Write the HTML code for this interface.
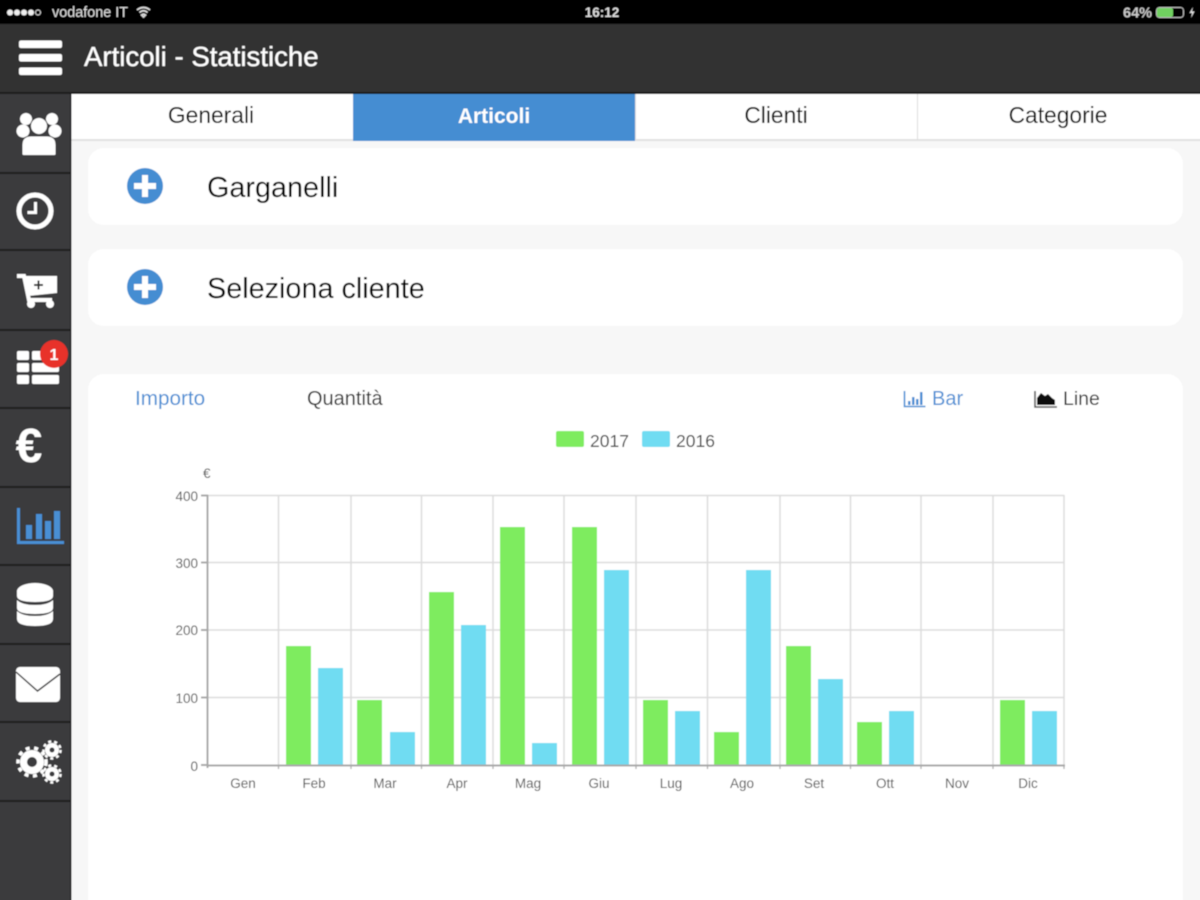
<!DOCTYPE html>
<html lang="it"><head><meta charset="utf-8"><title>Articoli - Statistiche</title>
<style>
html,body{margin:0;padding:0;width:1200px;height:900px;overflow:hidden;background:#f7f7f7}
svg{display:block;position:absolute;left:0;top:0}
text{font-family:"Liberation Sans",sans-serif}
</style></head><body>
<svg width="1200" height="900" viewBox="0 0 1200 900" xmlns="http://www.w3.org/2000/svg">
<defs><filter id="b" filterUnits="userSpaceOnUse" x="-20" y="-20" width="1240" height="940"><feGaussianBlur stdDeviation="0.6"/></filter></defs>
<g filter="url(#b)">
<rect x="-20" y="-20" width="1240" height="940" fill="#f7f7f7"/>
<!-- status bar -->
<rect x="-20" y="-20" width="1240" height="44" fill="#000"/>
<g fill="#eee"><circle cx="10" cy="12.500" r="3"/><circle cx="17" cy="12.500" r="3"/><circle cx="24" cy="12.500" r="3"/><circle cx="31" cy="12.500" r="3"/></g>
<circle cx="38" cy="12.500" r="2.500" fill="none" stroke="#ddd"/>
<text x="52" y="17" font-size="14.400" fill="#ddd">vodafone IT</text>
<path d="M137 10q6.500-5 13 0M139.500 12.500q4-3.500 8 0M141.500 15q2-1.500 4 0l-2 2z" fill="none" stroke="#ddd" stroke-width="1.600"/>
<text x="602" y="17" font-size="13.500" font-weight="bold" fill="#ddd" text-anchor="middle">16:12</text>
<text x="1123" y="17.500" font-size="14.500" font-weight="bold" fill="#c8c8c8">64%</text>
<rect x="1156.500" y="7.500" width="27" height="10" rx="3" fill="none" stroke="#bbb"/>
<rect x="1157" y="8" width="16" height="9" rx="2" fill="#70d060"/>
<path d="M1193 7l-3.500 6h2.500l-1 5 3.500-6.500h-2.500z" fill="#ddd"/>
<!-- header -->
<rect x="-20" y="24" width="1240" height="68" fill="#333"/>
<rect x="-20" y="92" width="1240" height="2" fill="#1a1a1a"/>
<g fill="#fff"><rect x="19" y="40.500" width="43" height="7.500" rx="2"/><rect x="19" y="54" width="43" height="7.500" rx="2"/><rect x="19" y="67.500" width="43" height="7.500" rx="2"/></g>
<text x="84" y="66" font-size="27.600" fill="#fff" stroke="#fff" stroke-width=".25">Articoli - Statistiche</text>
<!-- sidebar -->
<rect x="-20" y="94" width="90" height="826" fill="#3a3a3c"/>
<rect x="70" y="94" width="1.500" height="826" fill="#222"/>
<g fill="#1e1e1e"><rect x="-20" y="172" width="90" height="2"/><rect x="-20" y="249" width="90" height="2"/><rect x="-20" y="329" width="90" height="2"/><rect x="-20" y="407" width="90" height="2"/><rect x="-20" y="486" width="90" height="2"/><rect x="-20" y="564" width="90" height="2"/><rect x="-20" y="643" width="90" height="2"/><rect x="-20" y="721" width="90" height="2"/><rect x="-20" y="800" width="90" height="2"/></g>
<!-- people -->
<g fill="#fff"><circle cx="26" cy="119" r="6"/><circle cx="52" cy="119" r="6"/><circle cx="23" cy="131" r="6.500"/><circle cx="55" cy="131" r="6.500"/><rect x="17" y="127" width="12" height="9" rx="4"/><rect x="49" y="127" width="12" height="9" rx="4"/></g>
<circle cx="39" cy="126" r="8.500" fill="#fff" stroke="#3a3a3c" stroke-width="1"/>
<path d="M22 154v-9q0-9 9-9h16q9 0 9 9v9q0 1.500-2 1.500H24q-2 0-2-1.500z" fill="#fff" stroke="#3a3a3c" stroke-width="1"/>
<!-- clock -->
<circle cx="35" cy="211" r="16" fill="none" stroke="#fff" stroke-width="5"/>
<path d="M35.500 202v10.500h-8" fill="none" stroke="#fff" stroke-width="3"/>
<!-- cart -->
<path d="M17 276h7l5 24h23" fill="none" stroke="#fff" stroke-width="4"/>
<path d="M25 276h32v17l-29 3z" fill="#fff"/>
<circle cx="31" cy="304" r="4" fill="#fff"/><circle cx="50" cy="304" r="4" fill="#fff"/>
<path d="M34 285h9M38.500 280.500v9" stroke="#333" stroke-width="2" fill="none"/>
<!-- table -->
<g fill="#fff"><rect x="17" y="351" width="12" height="9" rx="1.500"/><rect x="17" y="363" width="12" height="9" rx="1.500"/><rect x="17" y="375" width="12" height="9" rx="1.500"/><rect x="32" y="351" width="27" height="9" rx="1.500"/><rect x="32" y="363" width="27" height="9" rx="1.500"/><rect x="32" y="375" width="27" height="9" rx="1.500"/></g>
<circle cx="54" cy="354" r="14" fill="#e8302a"/>
<text x="54" y="360" font-size="16" font-weight="bold" fill="#fff" text-anchor="middle">1</text>
<!-- euro -->
<text x="29" y="462" font-size="48" font-weight="bold" fill="#fff" text-anchor="middle">€</text>
<!-- bars active -->
<g fill="#4a8fd4"><rect x="17" y="508" width="3" height="35"/><rect x="17" y="541" width="47" height="3"/><rect x="26" y="525" width="6" height="14"/><rect x="36" y="514" width="6" height="25"/><rect x="45" y="521" width="6" height="18"/><rect x="54" y="511" width="6" height="28"/></g>
<!-- database -->
<g fill="#fff"><path d="M17 611v8q0 7 18 7t18-7v-8q-5 5-18 5t-18-5z"/><path d="M17 600v8q0 6 18 6t18-6v-8q-5 5-18 5t-18-5z"/><path d="M17 590v6q0 6 18 6t18-6v-6q-5 5-18 5t-18-5z"/><ellipse cx="35" cy="591" rx="18" ry="8"/></g>
<!-- mail -->
<rect x="16" y="667" width="44" height="35" rx="4" fill="#fff"/>
<path d="M16 672l21.500 19 22.500-17" fill="none" stroke="#3a3a3c" stroke-width="1.500"/>
<!-- gears -->
<g fill="#fff">
<circle cx="32" cy="762" r="12"/><circle cx="52" cy="750" r="7"/><circle cx="52" cy="774" r="7"/>
<g stroke="#fff" stroke-width="3.500" stroke-dasharray="4 4.500"><circle cx="32" cy="762" r="14" fill="none"/></g>
<g stroke="#fff" stroke-width="2.500" stroke-dasharray="3 3"><circle cx="52" cy="750" r="8.500" fill="none"/><circle cx="52" cy="774" r="8.500" fill="none"/></g>
</g>
<circle cx="32" cy="762" r="5" fill="#3a3a3c"/><circle cx="52" cy="750" r="2.500" fill="#3a3a3c"/><circle cx="52" cy="774" r="2.500" fill="#3a3a3c"/>
<!-- tabs -->
<rect x="71.500" y="94" width="1150" height="46" fill="#fff"/>
<rect x="71.500" y="139" width="1150" height="2" fill="#e2e2e2"/>
<rect x="353" y="94" width="282" height="47" fill="#458dd2"/>
<rect x="917" y="94" width="1" height="46" fill="#ddd"/>
<rect x="635" y="94" width="1" height="46" fill="#ddd"/>
<g font-size="22.800" text-anchor="middle" fill="#000"><text x="211" y="123">Generali</text><text x="494" y="123" fill="#fff" font-weight="bold" font-size="21">Articoli</text><text x="776" y="123">Clienti</text><text x="1058" y="123">Categorie</text></g>
<!-- cards -->
<rect x="88" y="148" width="1095" height="77" rx="16" fill="#fff"/>
<rect x="88" y="249" width="1095" height="77" rx="16" fill="#fff"/>
<rect x="88" y="374" width="1095" height="560" rx="16" fill="#fff"/>
<circle cx="145" cy="186" r="18" fill="#458dd2"/><path d="M134 186h22M145 175v22" stroke="#fff" stroke-width="6"/>
<circle cx="145" cy="287" r="18" fill="#458dd2"/><path d="M134 287h22M145 276v22" stroke="#fff" stroke-width="6"/>
<text x="207" y="197" font-size="28.800" fill="#000">Garganelli</text>
<text x="207" y="298" font-size="28.800" fill="#000">Seleziona cliente</text>
<!-- chart toolbar -->
<text x="135" y="405" font-size="20.700" fill="#4a8fd4">Importo</text>
<text x="307" y="405" font-size="20" fill="#333">Quantità</text>
<path d="M904.500 391v15.500h21" fill="none" stroke="#4a8fd4" stroke-width="1.600"/>
<g fill="#4a8fd4"><rect x="908" y="401" width="2.500" height="4"/><rect x="912" y="397" width="2.500" height="8"/><rect x="916" y="399" width="2.500" height="6"/><rect x="920" y="392" width="2.500" height="13"/></g>
<text x="932" y="405" font-size="20" fill="#4a8fd4">Bar</text>
<path d="M1035 391v16h22" fill="none" stroke="#555" stroke-width="1.600"/>
<path d="M1037 405v-7l4-5 4 3 3-2 4 4 3 2v5z" fill="#111"/>
<text x="1063" y="405" font-size="19.500" fill="#333">Line</text>
<!-- legend -->
<rect x="556" y="431" width="28" height="16" rx="2" fill="#7eec5e"/>
<text x="590" y="447" font-size="17.500" fill="#444">2017</text>
<rect x="642" y="431" width="28" height="16" rx="2" fill="#6fdcf2"/>
<text x="676" y="447" font-size="17.500" fill="#444">2016</text>
<text x="203" y="478" font-size="13.500" fill="#555">€</text>
<!-- grid -->
<g stroke="#dcdcdc" stroke-width="1.500" fill="none">
<path d="M207 495.500H1064M207 562.500H1064M207 630H1064M207 697.500H1064"/>
<path d="M278.500 495V765M351 495V765M421.500 495V765M493 495V765M564 495V765M636 495V765M707.500 495V765M780 495V765M850.500 495V765M921 495V765M993 495V765M1064 495V765"/>
</g>
<!-- bars -->
<g fill="#7eec5e">
<rect x="286" y="646" width="25" height="119"/><rect x="357" y="700" width="25" height="65"/><rect x="429" y="592" width="25" height="173"/><rect x="500" y="527" width="25" height="238"/><rect x="572" y="527" width="25" height="238"/><rect x="643" y="700" width="25" height="65"/><rect x="714" y="732" width="25" height="33"/><rect x="786" y="646" width="25" height="119"/><rect x="857" y="722" width="25" height="43"/><rect x="1000" y="700" width="25" height="65"/>
</g>
<g fill="#6fdcf2">
<rect x="318" y="668" width="25" height="97"/><rect x="390" y="732" width="25" height="33"/><rect x="461" y="625" width="25" height="140"/><rect x="532" y="743" width="25" height="22"/><rect x="604" y="570" width="25" height="195"/><rect x="675" y="711" width="25" height="54"/><rect x="746" y="570" width="25" height="195"/><rect x="818" y="679" width="25" height="86"/><rect x="889" y="711" width="25" height="54"/><rect x="1032" y="711" width="25" height="54"/>
</g>
<!-- axes -->
<g stroke="#a8a8a8" stroke-width="2" fill="none">
<path d="M207.500 495V768M201 495.500h7M201 562.500h7M201 630h7M201 697.500h7M201 765h7"/>
<path d="M207 765.500H1065"/>
<path stroke-width="1.200" d="M278.500 765v4M351 765v4M421.500 765v4M493 765v4M564 765v4M636 765v4M707.500 765v4M780 765v4M850.500 765v4M921 765v4M993 765v4M1064 765v4"/>
</g>
<g font-size="13.500" fill="#555" text-anchor="end"><text x="198" y="501">400</text><text x="198" y="568">300</text><text x="198" y="635">200</text><text x="198" y="703">100</text><text x="198" y="771">0</text></g>
<g font-size="13.500" fill="#555" text-anchor="middle"><text x="243" y="788">Gen</text><text x="314" y="788">Feb</text><text x="385" y="788">Mar</text><text x="457" y="788">Apr</text><text x="528" y="788">Mag</text><text x="599" y="788">Giu</text><text x="671" y="788">Lug</text><text x="742" y="788">Ago</text><text x="814" y="788">Set</text><text x="885" y="788">Ott</text><text x="957" y="788">Nov</text><text x="1028" y="788">Dic</text></g>
</g>
</svg>
</body></html>
